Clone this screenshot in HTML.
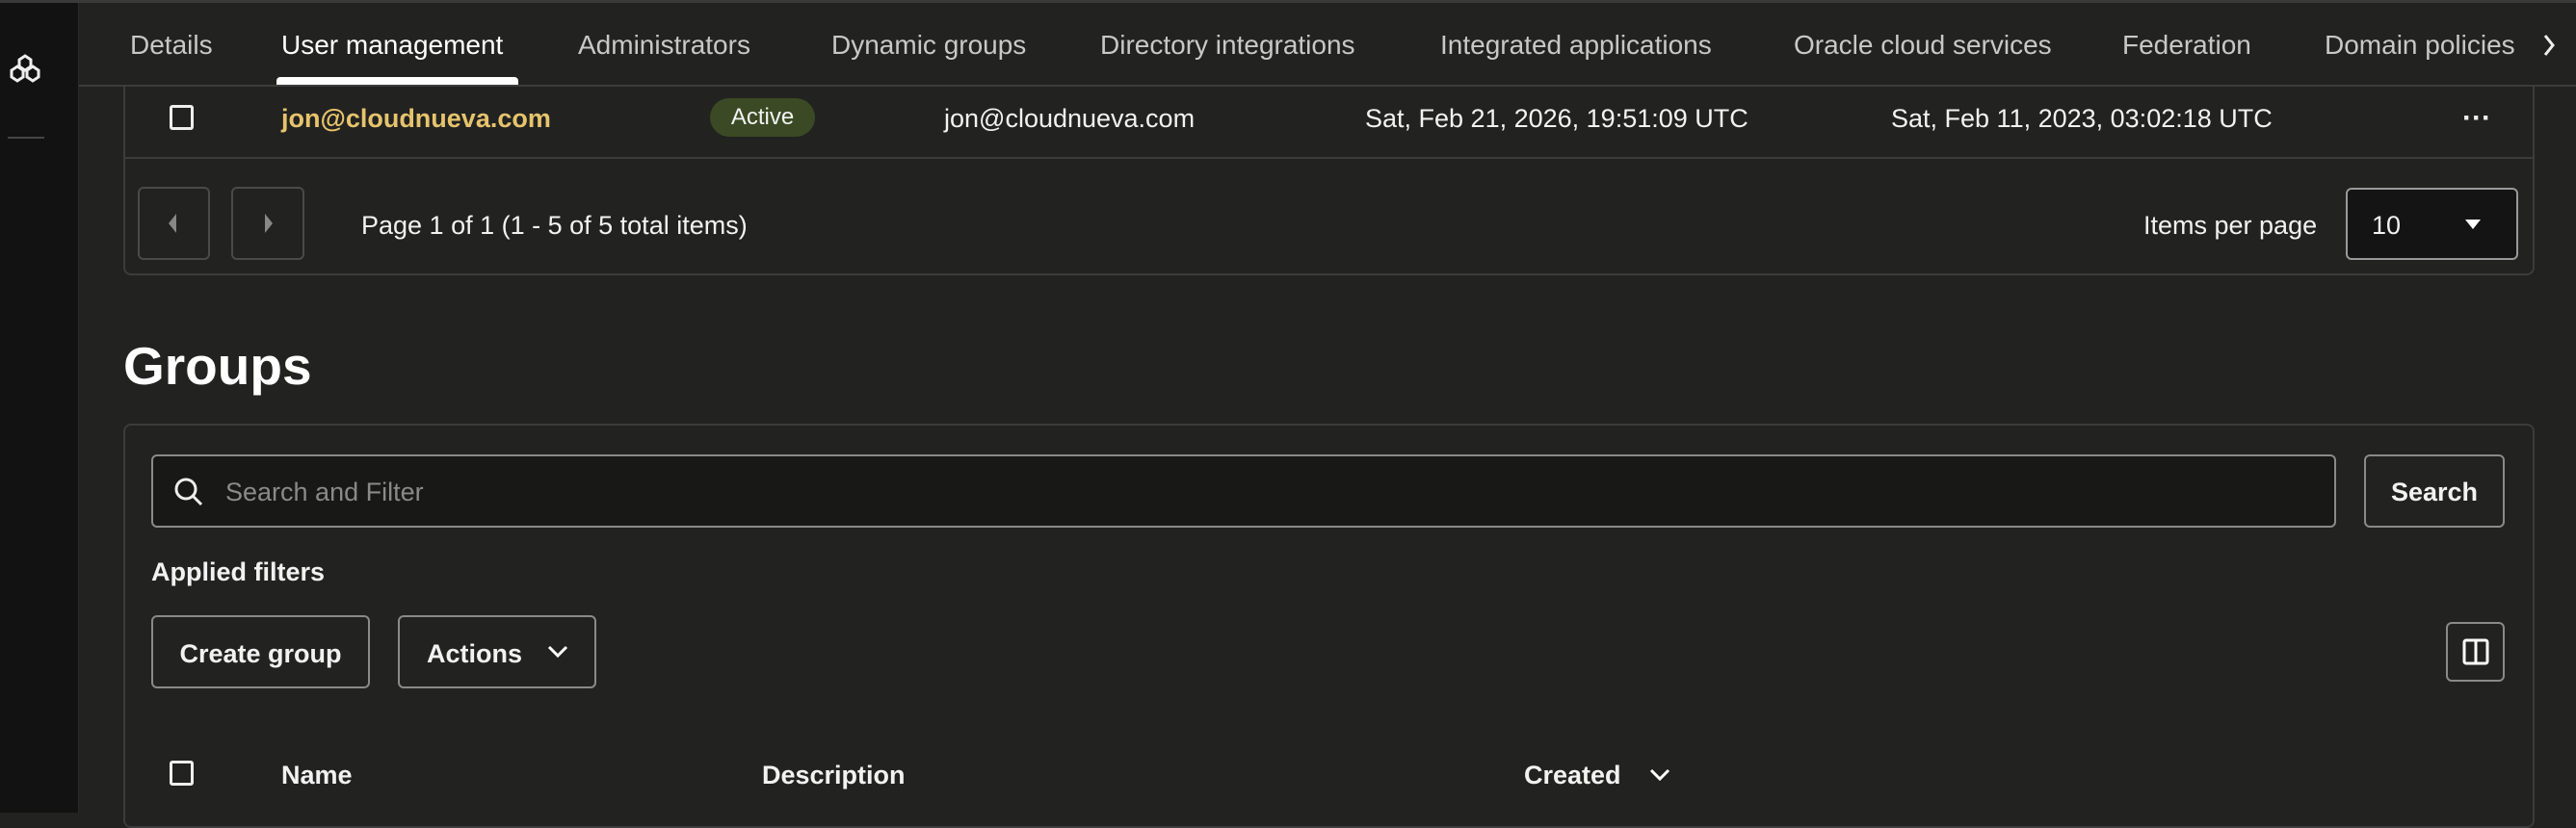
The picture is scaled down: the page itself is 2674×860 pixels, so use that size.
<!DOCTYPE html>
<html><head><meta charset="utf-8"><style>
*{box-sizing:border-box;margin:0;padding:0}
body{width:2674px;height:844px;background:#222221;color:#f2f2f2;font-family:"Liberation Sans",sans-serif;position:relative;overflow:hidden}
.a{position:absolute;white-space:nowrap}
.t{font-size:28px;color:#c8c8c8;top:31px}
.b{font-size:27px;line-height:32px}
.box{position:absolute;border:2px solid #8a8a8a;border-radius:6px}
.cb{position:absolute;width:25px;height:26px;border:3px solid #eee;border-radius:3px}
</style></head><body>
<div class="a" style="left:0;top:0;width:82px;height:844px;background:#121212;border-right:1px solid #2a2a2a"></div>
<div class="a" style="left:0;top:0;width:2674px;height:3px;background:#3a3a3a"></div>
<svg class="a" style="left:8px;top:55px" width="36" height="34" viewBox="0 0 36 34" fill="none" stroke="#eee" stroke-width="3"><path d="M18 3l6 4v7l-6 4-6-4V7z M10 14l6 4v7l-6 4-6-4v-7z M26 14l6 4v7l-6 4-6-4v-7z"/></svg>
<div class="a" style="left:8px;top:142px;width:38px;height:2px;background:#444"></div>
<div class="a" style="left:82px;top:88px;width:2592px;height:2px;background:#3c3c3c"></div>
<div class="a t" style="left:135px">Details</div>
<div class="a t" style="left:292px;color:#fff">User management</div>
<div class="a" style="left:287px;top:80px;width:251px;height:8px;background:#fff;border-radius:4px 4px 0 0"></div>
<div class="a t" style="left:600px">Administrators</div>
<div class="a t" style="left:863px">Dynamic groups</div>
<div class="a t" style="left:1142px">Directory integrations</div>
<div class="a t" style="left:1495px">Integrated applications</div>
<div class="a t" style="left:1862px">Oracle cloud services</div>
<div class="a t" style="left:2203px">Federation</div>
<div class="a t" style="left:2413px;width:200px;overflow:hidden">Domain policies</div>
<div class="a" style="left:2618px;top:3px;width:56px;height:85px;background:#222221"></div>
<svg class="a" style="left:2638px;top:34px" width="16" height="26" viewBox="0 0 16 26"><path d="M4 3l8 10-8 10" stroke="#eee" stroke-width="3" fill="none"/></svg>

<div class="a" style="left:128px;top:90px;width:2503px;height:196px;border:2px solid #3c3c3c;border-top:none;border-radius:0 0 8px 8px"></div>
<div class="a" style="left:128px;top:163px;width:2503px;height:2px;background:#3c3c3c"></div>
<div class="cb" style="left:176px;top:109px"></div>
<div class="a b" style="left:292px;top:107px;color:#e6c46c;font-weight:bold">jon@cloudnueva.com</div>
<div class="a" style="left:737px;top:102px;width:109px;height:40px;background:#3b4a24;border-radius:20px;font-size:24px;text-align:center;line-height:40px">Active</div>
<div class="a b" style="left:980px;top:107px">jon@cloudnueva.com</div>
<div class="a b" style="left:1417px;top:107px">Sat, Feb 21, 2026, 19:51:09 UTC</div>
<div class="a b" style="left:1963px;top:107px">Sat, Feb 11, 2023, 03:02:18 UTC</div>
<div class="a" style="left:2556px;top:106px;font-size:30px;font-weight:bold">···</div>
<div class="box" style="left:143px;top:194px;width:75px;height:76px;border-color:#4a4a4a"></div>
<svg class="a" style="left:174px;top:222px" width="10" height="20"><path d="M9 0v20L1 10z" fill="#888"/></svg>
<div class="box" style="left:240px;top:194px;width:76px;height:76px;border-color:#4a4a4a"></div>
<svg class="a" style="left:274px;top:222px" width="10" height="20"><path d="M1 0v20l8-10z" fill="#888"/></svg>
<div class="a b" style="left:375px;top:218px">Page 1 of 1 (1 - 5 of 5 total items)</div>
<div class="a b" style="left:2225px;top:218px">Items per page</div>
<div class="box" style="left:2435px;top:195px;width:179px;height:75px;background:#141414;border-color:#999"></div>
<div class="a b" style="left:2462px;top:218px">10</div>
<svg class="a" style="left:2559px;top:228px" width="16" height="12"><path d="M0 0h16L8 10z" fill="#fff"/></svg>

<div class="a" style="left:128px;top:348px;font-size:55px;font-weight:bold;color:#fff">Groups</div>
<div class="a" style="left:128px;top:440px;width:2503px;height:420px;border:2px solid #3c3c3c;border-radius:8px"></div>
<div class="box" style="left:157px;top:472px;width:2268px;height:76px;background:#181817"></div>
<svg class="a" style="left:180px;top:495px" width="32" height="32" viewBox="0 0 32 32" fill="none" stroke="#eee" stroke-width="3"><circle cx="13" cy="13" r="10"/><path d="M20 20l9 9"/></svg>
<div class="a b" style="left:234px;top:495px;color:#8a8a8a">Search and Filter</div>
<div class="box" style="left:2454px;top:472px;width:146px;height:76px"></div>
<div class="a b" style="left:2454px;top:495px;width:146px;text-align:center;font-weight:bold">Search</div>
<div class="a b" style="left:157px;top:578px;font-weight:bold">Applied filters</div>
<div class="box" style="left:157px;top:639px;width:227px;height:76px"></div>
<div class="a b" style="left:157px;top:663px;width:227px;text-align:center;font-weight:bold">Create group</div>
<div class="box" style="left:413px;top:639px;width:206px;height:76px"></div>
<div class="a b" style="left:443px;top:663px;font-weight:bold">Actions</div>
<svg class="a" style="left:568px;top:670px" width="22" height="14"><path d="M2 2l9 9 9-9" stroke="#fff" stroke-width="3" fill="none"/></svg>
<div class="box" style="left:2539px;top:646px;width:61px;height:62px"></div>
<svg class="a" style="left:2556px;top:663px" width="28" height="28" viewBox="0 0 28 28" fill="none" stroke="#fff" stroke-width="3"><rect x="2" y="2" width="24" height="24" rx="2"/><path d="M14 2v24"/></svg>
<div class="cb" style="left:176px;top:790px"></div>
<div class="a b" style="left:292px;top:789px;font-weight:bold">Name</div>
<div class="a b" style="left:791px;top:789px;font-weight:bold">Description</div>
<div class="a b" style="left:1582px;top:789px;font-weight:bold">Created</div>
<svg class="a" style="left:1712px;top:798px" width="22" height="14"><path d="M2 2l9 9 9-9" stroke="#fff" stroke-width="3" fill="none"/></svg>
</body></html>
